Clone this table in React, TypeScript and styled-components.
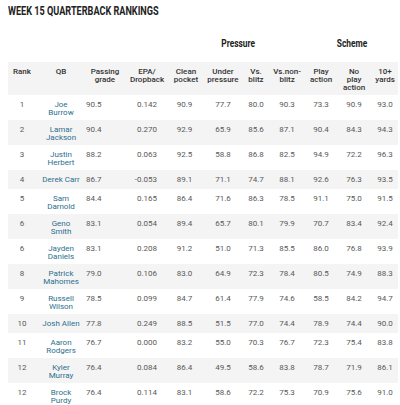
import React from 'react'
import styled, { createGlobalStyle } from 'styled-components'

const GlobalStyle = createGlobalStyle`
  html, body {
    margin: 0;
    padding: 0;
    background: #fff;
  }
  body {
    font-family: Roboto, 'Liberation Sans', sans-serif;
  }
`

const Page = styled.div`
  width: 400px;
  height: 405px;
  overflow: hidden;
  padding: 0 2px 0 8px;
  box-sizing: border-box;
`

const Title = styled.h1`
  margin: 0;
  padding-top: 1px;
  height: 19px;
  font-size: 12px;
  line-height: 16px;
  font-weight: 700;
  color: #222;
  white-space: nowrap;
  display: inline-block;
  transform: scaleX(0.76);
  transform-origin: left center;
`

const Table = styled.table`
  width: 390px;
  border-collapse: collapse;
  table-layout: fixed;
  font-size: 8px;
`

const GroupCell = styled.th`
  height: 28px;
  padding: 0 0 12px;
  vertical-align: bottom;
  text-align: center;
  font-weight: 700;
  font-size: 11px;
  line-height: 13px;
  color: #222;
`

const GroupLabel = styled.span`
  display: inline-block;
  transform: scaleX(0.76);
`

const HeadRow = styled.tr`
  background: #f4f4f4;
`

const HeadCell = styled.th`
  padding: 6px 0 3px;
  vertical-align: top;
  text-align: center;
  font-weight: 500;
  line-height: 8px;
  color: #333;
`

const Row = styled.tr<{ $striped: boolean }>`
  background: ${(p) => (p.$striped ? '#f4f4f4' : '#fff')};
`

const Cell = styled.td<{ $align: string; $padR: number }>`
  height: 10px;
  padding: 6px ${(p) => p.$padR}px 3px 0;
  vertical-align: top;
  text-align: ${(p) => p.$align};
  line-height: 8px;
  color: #595959;
`

const Name = styled.td`
  padding: 6px 0 3px;
  vertical-align: top;
  text-align: center;
  line-height: 8px;
  color: #2d6f8e;
`

const widths = [28, 50, 38, 46, 32, 42, 24, 38, 30, 36, 26]

const heads = [
  ['Rank'],
  ['QB'],
  ['Passing', 'grade'],
  ['EPA/', 'Dropback'],
  ['Clean', 'pocket'],
  ['Under', 'pressure'],
  ['Vs.', 'blitz'],
  ['Vs.non-', 'blitz'],
  ['Play', 'action'],
  ['No', 'play', 'action'],
  ['10+', 'yards'],
]

// alignment of the stat columns (after rank + qb)
const statCols: { align: string; padR: number }[] = [
  { align: 'left', padR: 0 },
  { align: 'right', padR: 13 },
  { align: 'center', padR: 3 },
  { align: 'center', padR: 0 },
  { align: 'center', padR: 0 },
  { align: 'center', padR: 0 },
  { align: 'center', padR: 0 },
  { align: 'center', padR: 0 },
  { align: 'center', padR: 0 },
]

const rows: [string, string[], string[]][] = [
  ['1', ['Joe', 'Burrow'], ['90.5', '0.142', '90.9', '77.7', '80.0', '90.3', '73.3', '90.9', '93.0']],
  ['2', ['Lamar', 'Jackson'], ['90.4', '0.270', '92.9', '65.9', '85.6', '87.1', '90.4', '84.3', '94.3']],
  ['3', ['Justin', 'Herbert'], ['88.2', '0.063', '92.5', '58.8', '86.8', '82.5', '94.9', '72.2', '96.3']],
  ['4', ['Derek Carr'], ['86.7', '-0.053', '89.1', '71.1', '74.7', '88.1', '92.6', '76.3', '93.5']],
  ['5', ['Sam', 'Darnold'], ['84.4', '0.165', '86.4', '71.6', '86.3', '78.5', '91.1', '75.0', '91.5']],
  ['6', ['Geno', 'Smith'], ['83.1', '0.054', '89.4', '65.7', '80.1', '79.9', '70.7', '83.4', '92.4']],
  ['6', ['Jayden', 'Daniels'], ['83.1', '0.208', '91.2', '51.0', '71.3', '85.5', '86.0', '76.8', '93.9']],
  ['8', ['Patrick', 'Mahomes'], ['79.0', '0.106', '83.0', '64.9', '72.3', '78.4', '80.5', '74.9', '88.3']],
  ['9', ['Russell', 'Wilson'], ['78.5', '0.099', '84.7', '61.4', '77.9', '74.6', '58.5', '84.2', '94.7']],
  ['10', ['Josh Allen'], ['77.8', '0.249', '88.5', '51.5', '77.0', '74.4', '78.9', '74.4', '90.0']],
  ['11', ['Aaron', 'Rodgers'], ['76.7', '0.000', '83.2', '55.0', '70.3', '76.7', '72.3', '75.4', '83.8']],
  ['12', ['Kyler', 'Murray'], ['76.4', '0.084', '86.4', '49.5', '58.6', '83.8', '78.7', '71.9', '86.1']],
  ['12', ['Brock', 'Purdy'], ['76.4', '0.114', '83.1', '58.6', '72.2', '75.3', '70.9', '75.6', '91.0']],
]

const lines = (parts: string[]) =>
  parts.map((t, i) => (
    <React.Fragment key={i}>
      {i > 0 && <br />}
      {t}
    </React.Fragment>
  ))

export default function App() {
  return (
    <Page>
      <GlobalStyle />
      <Title>WEEK 15 QUARTERBACK RANKINGS</Title>
      <Table>
        <colgroup>
          {widths.map((w, i) => (
            <col key={i} style={{ width: w }} />
          ))}
        </colgroup>
        <thead>
          <tr>
            <GroupCell colSpan={4} />
            <GroupCell colSpan={4}>
              <GroupLabel>Pressure</GroupLabel>
            </GroupCell>
            <GroupCell colSpan={3}>
              <GroupLabel>Scheme</GroupLabel>
            </GroupCell>
          </tr>
          <HeadRow>
            {heads.map((h, i) => (
              <HeadCell key={i}>{lines(h)}</HeadCell>
            ))}
          </HeadRow>
        </thead>
        <tbody>
          {rows.map(([rank, name, stats], r) => (
            <Row key={r} $striped={r % 2 === 1}>
              <Cell $align="center" $padR={0}>
                {rank}
              </Cell>
              <Name>{lines(name)}</Name>
              {stats.map((s, i) => (
                <Cell key={i} $align={statCols[i].align} $padR={statCols[i].padR}>
                  {s}
                </Cell>
              ))}
            </Row>
          ))}
        </tbody>
      </Table>
    </Page>
  )
}
